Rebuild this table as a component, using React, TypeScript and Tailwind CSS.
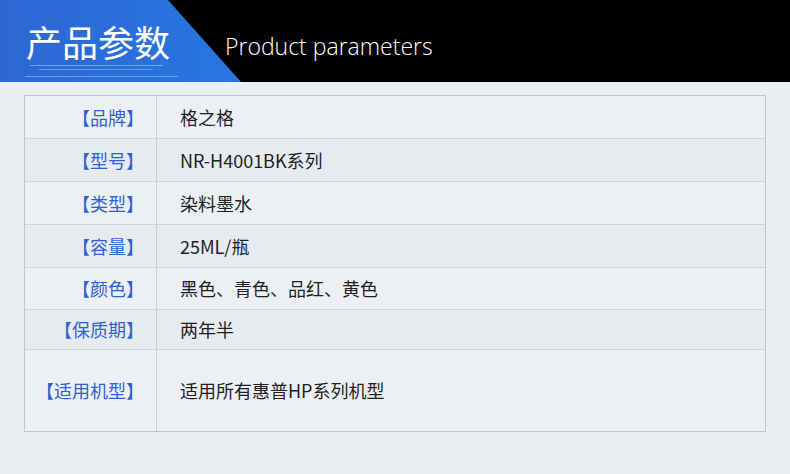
const rows: { label: string; value: string; h: string; tone: string }[] = [
  { label: '【品牌】', value: '格之格', h: 'h-[42px]', tone: 'bg-[#eceff4]' },
  { label: '【型号】', value: 'NR-H4001BK系列', h: 'h-[43px]', tone: 'bg-[#e7eaef]' },
  { label: '【类型】', value: '染料墨水', h: 'h-[43px]', tone: 'bg-[#eceff4]' },
  { label: '【容量】', value: '25ML/瓶', h: 'h-[43px]', tone: 'bg-[#e7eaef]' },
  { label: '【颜色】', value: '黑色、青色、品红、黄色', h: 'h-[42px]', tone: 'bg-[#eceff4]' },
  { label: '【保质期】', value: '两年半', h: 'h-[40px]', tone: 'bg-[#e7eaef]' },
  { label: '【适用机型】', value: '适用所有惠普HP系列机型', h: 'h-[82px]', tone: 'bg-[#eceff4]' },
];

export default function App() {
  return (
    <div
      className="w-[790px] h-[474px] bg-[#ebeef3] overflow-hidden"
      style={{ fontFamily: '"Noto Sans CJK SC", "Noto Sans", sans-serif' }}
    >
      {/* 顶部标题栏 */}
      <div className="relative h-[82px] bg-black">
        <div className="absolute inset-0 bg-gradient-to-r from-[#2d67d4] to-[#0a98f7] [clip-path:polygon(0_0,168px_0,241px_100%,0_100%)]" />
        <div className="relative flex h-full items-start">
          <div className="w-[225px] pl-[26px] pt-[23px]">
            <div className="text-[36px] leading-none text-white">产品参数</div>
            <div className="mt-[6px] flex flex-col">
              <div className="ml-[4px] h-px w-[133px] bg-[#6aa6f0]" />
              <div className="ml-[13px] mt-[3px] h-px w-[114px] bg-[#5c9cef]" />
              <div className="-ml-[1px] mt-[6px] h-px w-[153px] bg-[#5fa7f5]" />
            </div>
          </div>
          <div
            className="pt-[35px] text-[23px] leading-none font-light text-white"
            style={{ fontFamily: '"Open Sans", sans-serif' }}
          >
            Product parameters
          </div>
        </div>
      </div>

      {/* 参数表格 */}
      <div className="px-[24px] pt-[13px]">
        <div className="w-[742px] border border-[#c4c4c4]">
          {rows.map((r, i) => (
            <div
              key={r.label}
              className={`flex ${r.h} ${r.tone} ${i > 0 ? 'border-t border-[#d6d3d1]' : ''}`}
            >
              <div className="flex w-[132px] items-center justify-end pr-[12px] border-r border-[#cfcfcf] text-[18px] text-[#2c63d2]">
                {r.label}
              </div>
              <div className="flex flex-1 items-center pl-[23px] text-[18px] text-[#1f1f1f]">
                {r.value}
              </div>
            </div>
          ))}
        </div>
      </div>
    </div>
  );
}
